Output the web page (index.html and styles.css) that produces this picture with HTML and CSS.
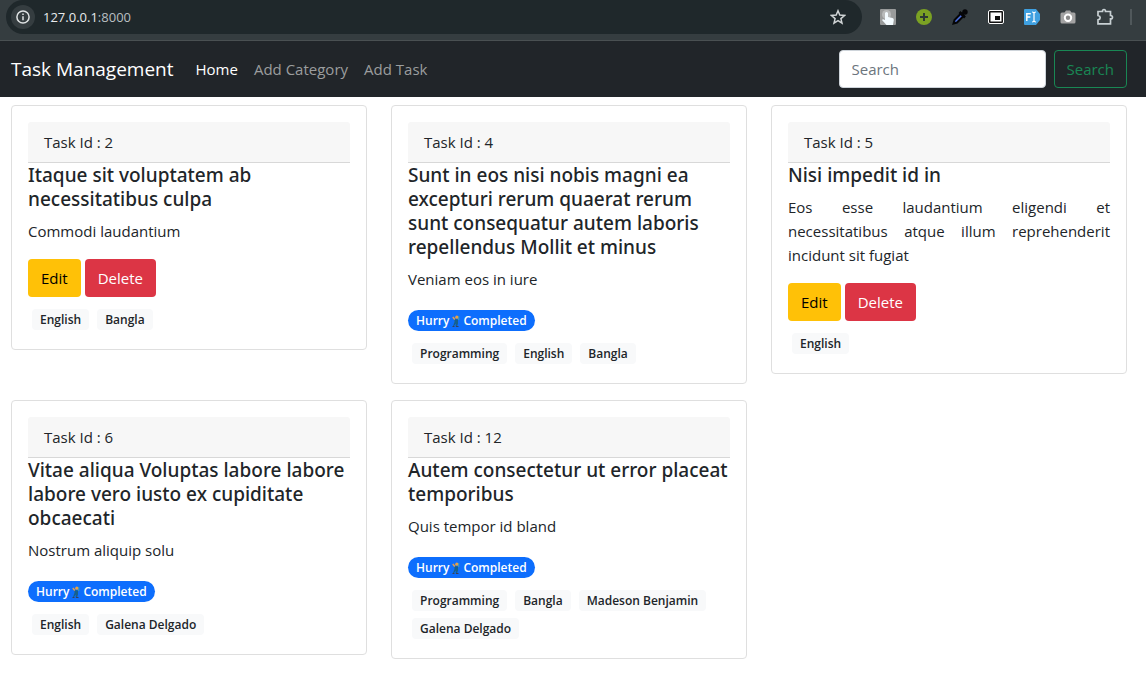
FILE: index.html
```html
<!DOCTYPE html>
<html lang="en">
<head>
<meta charset="utf-8">
<meta name="viewport" content="width=device-width, initial-scale=1">
<title>Task Management</title>
<link rel="stylesheet" href="styles.css">
</head>
<body>
<div class="browser-bar">
  <div class="address">
    <span class="site-info">
      <svg width="14" height="14" viewBox="0 0 14 14" fill="none" stroke="#dfe3e4" stroke-width="1.5"><circle cx="7" cy="7" r="6.1"/><path d="M7 6.2v4M7 3.4v1.6"/></svg>
    </span>
    <span class="url">127.0.0.1<span class="port">:8000</span></span>
    <svg class="star" width="16" height="16" viewBox="0 0 16 16" fill="none" stroke="#d0d4d5" stroke-width="1.5"><path d="M8 1.8l1.8 4.3 4.7.4-3.6 3.1 1.1 4.6L8 11.700l-4 2.500 1.100-4.600L1.500 6.500l4.700-.4z"/></svg>
  </div>
  <div class="extensions">
    <svg width="16" height="16" viewBox="0 0 16 16"><rect width="16" height="16" rx="1" fill="#999b9b"/><circle cx="6.500" cy="5.500" r="4.500" fill="#b9bbbb"/><path d="M5 4q1.500-2 3 0v4l4.500 1q1.500.5 1.300 2l-.8 5H6.500L2 11q.8-1.600 3 0z" fill="#f3fbff"/></svg>
    <svg width="16" height="16" viewBox="0 0 16 16"><circle cx="8" cy="8" r="8" fill="#7ba223"/><path d="M8 4v8M4 8h8" stroke="#2d3b33" stroke-width="2"/></svg>
    <svg width="16" height="16" viewBox="0 0 16 16"><path d="M1.500 14.500l1-3.500L9 4.500 11.500 7 5 13.500z" fill="#4b6fe0" stroke="#050608" stroke-width="2"/><path d="M7.500 3l5.500 5.500M9.500 6L13 2.500" stroke="#050608" stroke-width="2.500"/><circle cx="13" cy="3" r="2.700" fill="#050608"/></svg>
    <svg width="16" height="16" viewBox="0 0 16 16"><rect x=".5" y="1.500" width="15" height="13" rx="1.500" fill="#111" stroke="#fff"/><rect x="2.500" y="3.500" width="11" height="9" fill="#fff"/><rect x="7" y="7" width="5" height="4" fill="#111"/></svg>
    <svg width="16" height="16" viewBox="0 0 16 16"><path d="M1 0h11l4 5v6l-4 5H1q-1 0-1-1V1q0-1 1-1z" fill="#3fa0e0"/><path d="M2.800 12V4.700h4M2.800 8h3.500" fill="none" stroke="#fff" stroke-width="1.500"/><path d="M8 3q2 0 2 1.500v7Q10 13 8 13M12 3q-2 0-2 1.500v7q0 1.500 2 1.500" fill="none" stroke="#fff" stroke-width="1.200"/></svg>
    <svg width="16" height="16" viewBox="0 0 16 16"><path d="M2 3.500h2.500L6 1.500h4l1.500 2H14q1.500 0 1.500 1.500v8q0 1.500-1.500 1.500H2Q.5 14.500.5 13V5Q.5 3.500 2 3.500z" fill="#a3a3a3"/><circle cx="8" cy="8.700" r="3.200" fill="#8a8a8a" stroke="#fff" stroke-width="2"/></svg>
    <svg width="18" height="18" viewBox="0 0 18 18" fill="none" stroke="#c8d0d3" stroke-width="1.700"><path d="M2 3.500h4.500q0-2 1.500-2t1.500 2h5v4q2 0 2 1.700t-2 1.700v5H2v-4q2.200-.5 2.200-2.200T2 7.500z"/></svg>
    <span class="divider"></span>
  </div>
</div>
<header class="navbar">
  <a class="brand" href="#">Task Management</a>
  <nav class="nav-links">
    <a class="nav-link active" href="#">Home</a>
    <a class="nav-link" href="#">Add Category</a>
    <a class="nav-link" href="#">Add Task</a>
  </nav>
  <form class="search">
    <input class="search-input" type="search" placeholder="Search" aria-label="Search">
    <button class="btn btn-outline" type="submit">Search</button>
  </form>
</header>
<svg class="sprite" aria-hidden="true">
  <symbol id="dancer" viewBox="0 0 8 12"><path d="M2.500 4L6 4.500v4l-1 3H3.500L4 8.500 2 11H1l1.500-4z" fill="#17608c"/><path d="M.8 2l2 2.500" stroke="#e6a04a" stroke-width="1.400"/><circle cx="4.800" cy="2.200" r="1.600" fill="#e6a04a"/><path d="M6.700 1v4" stroke="#4fa3a0"/><path d="M.5 11.500h2M4 11.500h2.500" stroke="#3c3f55"/></symbol>
</svg>
<main class="tasks">
  <article class="card">
    <div class="card-header">Task Id : 2</div>
    <h5 class="card-title">Itaque sit voluptatem ab necessitatibus culpa</h5>
    <p class="card-text">Commodi laudantium</p>
    <div class="actions"><button class="btn btn-edit" type="button">Edit</button><button class="btn btn-delete" type="button">Delete</button></div>
    <div class="tags"><span class="tag">English</span><span class="tag">Bangla</span></div>
  </article>
  <article class="card">
    <div class="card-header">Task Id : 4</div>
    <h5 class="card-title">Sunt in eos nisi nobis magni ea excepturi rerum quaerat rerum sunt consequatur autem laboris repellendus Mollit et minus</h5>
    <p class="card-text">Veniam eos in iure</p>
    <div class="status"><span class="pill">Hurry<svg class="dancer"><use href="#dancer"/></svg>Completed</span></div>
    <div class="tags"><span class="tag">Programming</span><span class="tag">English</span><span class="tag">Bangla</span></div>
  </article>
  <article class="card">
    <div class="card-header">Task Id : 5</div>
    <h5 class="card-title">Nisi impedit id in</h5>
    <p class="card-text">Eos esse laudantium eligendi et necessitatibus atque illum reprehenderit incidunt sit fugiat</p>
    <div class="actions"><button class="btn btn-edit" type="button">Edit</button><button class="btn btn-delete" type="button">Delete</button></div>
    <div class="tags"><span class="tag">English</span></div>
  </article>
  <article class="card">
    <div class="card-header">Task Id : 6</div>
    <h5 class="card-title">Vitae aliqua Voluptas labore labore labore vero iusto ex cupiditate obcaecati</h5>
    <p class="card-text">Nostrum aliquip solu</p>
    <div class="status"><span class="pill">Hurry<svg class="dancer"><use href="#dancer"/></svg>Completed</span></div>
    <div class="tags"><span class="tag">English</span><span class="tag">Galena Delgado</span></div>
  </article>
  <article class="card">
    <div class="card-header">Task Id : 12</div>
    <h5 class="card-title">Autem consectetur ut error placeat temporibus</h5>
    <p class="card-text">Quis tempor id bland</p>
    <div class="status"><span class="pill">Hurry<svg class="dancer"><use href="#dancer"/></svg>Completed</span></div>
    <div class="tags"><span class="tag">Programming</span><span class="tag">Bangla</span><span class="tag">Madeson Benjamin</span><span class="tag">Galena Delgado</span></div>
  </article>
</main>
</body>
</html>
```
FILE: styles.css
```css
* { box-sizing: border-box; }
body {
  margin: 0;
  background: #fff;
  color: #212529;
  font-family: "Open Sans", "Noto Sans", sans-serif;
  font-size: 15px;
  line-height: 24px;
}
a { text-decoration: none; }
svg { display: block; flex: none; }
.sprite { display: none; }

.browser-bar {
  display: flex;
  align-items: flex-start;
  height: 41px;
  padding-left: 6px;
  background: #353d40;
  border-bottom: 1px solid #4a5052;
}
.address {
  flex: 1;
  display: flex;
  align-items: center;
  height: 34px;
  padding: 0 16px 0 5px;
  border-radius: 17px;
  background: #1f282b;
}
.site-info {
  display: flex;
  align-items: center;
  justify-content: center;
  width: 24px;
  height: 24px;
  border-radius: 50%;
  background: #353d40;
}
.url { margin-left: 8px; color: #e8eaeb; font-size: 13px; }
.port { color: #b9bfc1; }
.star { margin-left: auto; }
.extensions {
  display: flex;
  align-items: center;
  gap: 20px;
  height: 34px;
  padding: 0 14px 0 18px;
}
.divider { width: 2px; height: 16px; margin-left: -4px; background: #50585b; }

.navbar {
  display: flex;
  align-items: center;
  height: 56px;
  padding: 0 19px 0 11px;
  background: #212529;
}
.brand { color: #fff; font-size: 19px; line-height: 30px; }
.nav-links { display: flex; gap: 16px; margin-left: 22px; }
.nav-link { color: #9b9d9e; }
.nav-link.active { color: #fff; }
.search { display: flex; gap: 8px; margin-left: auto; }
.search-input {
  width: 207px;
  height: 38px;
  padding: 6px 12px;
  border: 1px solid #ced4da;
  border-radius: 4px;
  background: #fff;
  color: #212529;
  font: inherit;
}
.search-input::placeholder { color: #6c757d; }

.btn {
  height: 38px;
  padding: 6px 12px;
  border: 1px solid transparent;
  border-radius: 4px;
  font: inherit;
}
.btn-outline { border-color: #198754; background: transparent; color: #198754; }
.btn-edit { background: #ffc107; color: #000; }
.btn-delete { background: #dc3545; color: #fff; }

.tasks {
  display: grid;
  grid-template-columns: repeat(3, minmax(0, 1fr));
  align-items: start;
  gap: 16px 24px;
  padding: 8px 19px 14px 11px;
}
.card { padding: 16px; border: 1px solid #dfdfdf; border-radius: 4px; }
.card-header {
  padding: 8px 16px;
  border-bottom: 1px solid #d8d8d8;
  border-radius: 3px 3px 0 0;
  background: #f7f7f7;
}
.card-title {
  margin: 0 0 8px;
  font-family: "Noto Sans", "Open Sans", sans-serif;
  font-size: 19px;
  font-weight: 500;
  line-height: 24px;
}
.card-text { margin: 0 0 16px; text-align: justify; }
.actions { display: flex; gap: 4px; }
.status { display: flex; align-items: flex-end; height: 24px; }
.pill, .tag {
  display: inline-flex;
  align-items: center;
  height: 21px;
  padding: 0 8px;
  font-size: 12px;
  font-weight: 600;
  line-height: 20px;
}
.pill { border-radius: 11px; background: #0d6efd; color: #fff; }
.dancer { width: 8px; height: 12px; margin: 0 3px; }
.tags { display: flex; flex-wrap: wrap; gap: 7px 8px; padding: 12px 4px 3px; }
.tag { border-radius: 4px; background: #f8f9fa; }
```
